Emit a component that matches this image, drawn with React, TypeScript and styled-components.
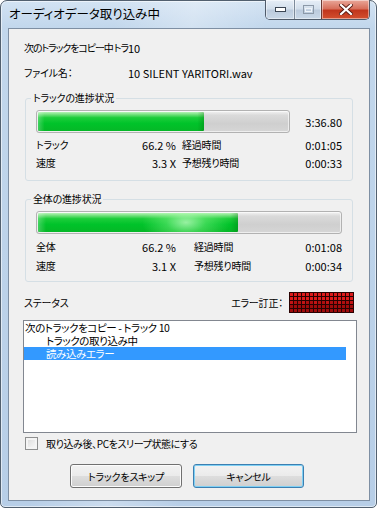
import React from "react";
import styled, { createGlobalStyle } from "styled-components";

const UI = `"Noto Sans CJK JP", "Liberation Sans", sans-serif`;

const Global = createGlobalStyle`
  html, body { margin: 0; padding: 0; background: #fff; }
  body { font-family: ${UI}; }
  #root { width: 377px; height: 508px; }
`;

const Window = styled.div`
  box-sizing: border-box;
  width: 377px;
  height: 508px;
  display: flex;
  flex-direction: column;
  border: 1px solid #52606f;
  border-radius: 7px 7px 5px 5px;
  padding: 0 6px 6px 7px;
  background:
    linear-gradient(100deg, rgba(255,255,255,0) 25%, rgba(255,255,255,0.28) 42%, rgba(255,255,255,0) 58%),
    linear-gradient(180deg, #d3e3f3 0px, #c2d7ec 26px, #b7cee7 100%);
  box-shadow: inset 0 0 0 1px rgba(255,255,255,0.55);
`;

const TitleBar = styled.div`
  height: 27px;
  display: flex;
  align-items: flex-start;
  justify-content: space-between;
`;

const Title = styled.div`
  font-size: 12.5px;
  line-height: 26px;
  padding-left: 1px;
  color: #000;
  font-feature-settings: "palt" 1;
`;

const Caption = styled.div`
  display: flex;
  margin-top: -1px;
  height: 19px;
  border: 1px solid #4f5b6a;
  border-top: none;
  border-radius: 0 0 5px 5px;
  overflow: hidden;
`;

const CapBtn = styled.div<{ $w: number; $close?: boolean }>`
  width: ${(p) => p.$w}px;
  height: 19px;
  display: flex;
  align-items: center;
  justify-content: center;
  box-sizing: border-box;
  border-left: ${(p) => (p.$close ? "1px solid #6b3a33" : "1px solid #7d8b9b")};
  &:first-child { border-left: none; }
  background: ${(p) =>
    p.$close
      ? "linear-gradient(180deg, #e9a89a 0%, #d7705c 45%, #c1361d 55%, #d3502f 100%)"
      : "linear-gradient(180deg, #e6eef7 0%, #d3dfec 45%, #bccbdd 55%, #c9d8e8 100%)"};
  box-shadow: inset 0 0 0 1px rgba(255,255,255,0.45);
`;

const Client = styled.div`
  flex: 1;
  display: flex;
  flex-direction: column;
  background: #f0f0f0;
  border: 1px solid #7e8fa3;
  padding: 12px 15px 0 15px;
  font-size: 10px;
  letter-spacing: -0.2px;
  color: #000;
  font-feature-settings: "palt" 1;
`;

const InfoGrid = styled.div`
  display: grid;
  grid-template-columns: 104px 1fr;
  row-gap: 11px;
  line-height: 14px;
  margin-bottom: 18px;
  white-space: nowrap;
  & > div:nth-child(2n) { font-size: 11px; letter-spacing: 0; }
`;

const Tight = styled.div`
  letter-spacing: -1.1px;
`;

const Group = styled.div<{ $mt?: number }>`
  position: relative;
  box-sizing: border-box;
  height: 83px;
  margin: ${(p) => p.$mt ?? 0}px 0 0 1px;
  width: 328px;
  border: 1px solid #d5dfe5;
  border-radius: 3px;
  padding: 11px 10px 0 10px;
`;

const GroupLabel = styled.div`
  position: absolute;
  left: 5px;
  top: -8px;
  padding: 0 2px;
  line-height: 14px;
  background: #f0f0f0;
`;

const BarRow = styled.div`
  display: flex;
  align-items: center;
  justify-content: space-between;
  height: 23px;
`;

const Track = styled.div<{ $w?: number }>`
  box-sizing: border-box;
  width: ${(p) => (p.$w ? `${p.$w}px` : "100%")};
  height: 23px;
  border: 1px solid #b2b2b2;
  border-radius: 3px;
  background: linear-gradient(180deg, #f4f4f4 0%, #dadada 20%, #cfcfcf 60%, #d6d6d6 100%);
  box-shadow: inset 0 0 0 1px rgba(255,255,255,0.6);
  overflow: hidden;
  padding: 1px;
`;

const Fill = styled.div<{ $glow?: boolean }>`
  height: 100%;
  border-radius: 1px;
  background:
    ${(p) =>
      p.$glow
        ? "radial-gradient(ellipse 22% 120% at 74% 50%, rgba(200,255,200,0.75) 0%, rgba(160,255,160,0.35) 45%, rgba(255,255,255,0) 100%),"
        : ""}
    linear-gradient(90deg, rgba(255,255,255,0.25) 0%, rgba(255,255,255,0) 4%, rgba(0,0,0,0) 96%, rgba(0,80,0,0.25) 100%),
    linear-gradient(180deg, #b7f3b7 0%, #6fe07a 14%, #1ccd3a 30%, #00c32a 60%, #05b827 100%);
`;

const Num = styled.div`
  font-size: 11px;
  letter-spacing: 0;
  line-height: 14px;
  text-align: right;
  white-space: pre;
`;

const StatGrid = styled.div<{ $rh: number }>`
  display: grid;
  grid-template-columns: 70px 70px 1fr auto;
  grid-auto-rows: ${(p) => p.$rh}px;
  align-items: center;
  margin-top: 3px;
  line-height: 14px;
`;

const Key = styled.div<{ $indent: number }>`
  padding-left: ${(p) => p.$indent}px;
`;

const StatusRow = styled.div`
  display: flex;
  align-items: center;
  justify-content: space-between;
  height: 21px;
  margin-top: 10px;
  line-height: 14px;
`;

const ErrBox = styled.div`
  display: flex;
  align-items: center;
  gap: 6px;
`;

const ListBox = styled.div`
  box-sizing: border-box;
  height: 113px;
  margin: 7px -3px 0 -1px;
  background: #fff;
  border: 1px solid #828790;
  font-size: 10.5px;
  letter-spacing: -0.4px;
`;

const Item = styled.div<{ $indent?: boolean; $selected?: boolean }>`
  height: 13px;
  line-height: 13px;
  margin: 0 10px 0 0;
  padding-left: ${(p) => (p.$indent ? 22 : 1)}px;
  background: ${(p) => (p.$selected ? "#3399ff" : "transparent")};
  color: ${(p) => (p.$selected ? "#fff" : "#000")};
  white-space: nowrap;
`;

const CheckRow = styled.label`
  display: flex;
  align-items: center;
  gap: 8px;
  margin: 4px 0 0 1px;
  height: 13px;
  line-height: 13px;
  letter-spacing: -0.4px;
`;

const Box = styled.span`
  box-sizing: border-box;
  width: 13px;
  height: 13px;
  border: 1px solid #8e8f8f;
  background: linear-gradient(135deg, #d8d8d8 0%, #eeeeee 60%, #fbfbfb 100%);
  box-shadow: inset 0 0 0 2px #f4f4f4;
`;

const ButtonRow = styled.div`
  display: flex;
  gap: 11px;
  margin-top: 14px;
  padding-left: 46px;
`;

const Button = styled.button<{ $focus?: boolean; $w: number }>`
  box-sizing: border-box;
  width: ${(p) => p.$w}px;
  height: 24px;
  font-family: ${UI};
  font-size: 10px;
  letter-spacing: -0.2px;
  font-feature-settings: "palt" 1;
  color: #000;
  border-radius: 3px;
  border: 1px solid ${(p) => (p.$focus ? "#3c7fb1" : "#707070")};
  background: linear-gradient(180deg, #f2f2f2 0%, #ebebeb 48%, #dddddd 52%, #cfcfcf 100%);
  box-shadow: inset 0 0 0 1px ${(p) => (p.$focus ? "#7fd0f4" : "#fcfcfc")};
  padding: 0;
`;

function ErrorGrid() {
  const cols = 16;
  const rows = 5;
  const cells: React.ReactNode[] = [];
  for (let r = 0; r < rows; r++) {
    for (let c = 0; c < cols; c++) {
      let fill = "#a00b0b";
      if (r < 2) fill = "#dd1b1b";
      else if (r === 2) fill = c % 3 === 0 ? "#c41414" : "#b00e0e";
      cells.push(<rect key={`${r}-${c}`} x={1 + c * 4} y={1 + r * 4} width={3} height={3} fill={fill} />);
    }
  }
  return (
    <svg width={65} height={21} viewBox="0 0 65 21">
      <rect x={0} y={0} width={65} height={21} fill="#2a0202" />
      {cells}
    </svg>
  );
}

const rows1 = [
  ["トラック", "66.2 %", "経過時間", "0:01:05"],
  ["速度", "3.3 X", "予想残り時間", "0:00:33"],
];
const rows2 = [
  ["全体", "66.2 %", "経過時間", "0:01:08"],
  ["速度", "3.1 X", "予想残り時間", "0:00:34"],
];

function Stats({ data, indent, rh }: { data: string[][]; indent: number; rh: number }) {
  return (
    <StatGrid $rh={rh}>
      {data.map((r) => (
        <React.Fragment key={r[0] + r[3]}>
          <div>{r[0]}</div>
          <Num>{r[1]}</Num>
          <Key $indent={indent}>{r[2]}</Key>
          <Num>{r[3]}</Num>
        </React.Fragment>
      ))}
    </StatGrid>
  );
}

export default function App() {
  const progress = 66.2;
  return (
    <>
      <Global />
      <Window>
        <TitleBar>
          <Title>オーディオデータ取り込み中</Title>
          <Caption>
            <CapBtn $w={28}>
              <svg width="11" height="5" viewBox="0 0 11 5">
                <rect x="0.5" y="0.5" width="10" height="4" fill="#fff" stroke="#3b4654" />
              </svg>
            </CapBtn>
            <CapBtn $w={27}>
              <svg width="11" height="9" viewBox="0 0 11 9">
                <rect x="0.5" y="0.5" width="10" height="8" fill="none" stroke="#8c99a8" />
                <rect x="2.5" y="3.5" width="6" height="3" fill="none" stroke="#eef3f8" />
              </svg>
            </CapBtn>
            <CapBtn $w={48} $close>
              <svg width="14" height="11" viewBox="0 0 14 11">
                <path d="M2 1 L12 10 M12 1 L2 10" stroke="#5a1d14" strokeWidth="4" strokeLinecap="square" />
                <path d="M2 1 L12 10 M12 1 L2 10" stroke="#ffffff" strokeWidth="2.2" strokeLinecap="square" />
              </svg>
            </CapBtn>
          </Caption>
        </TitleBar>
        <Client>
          <InfoGrid>
            <Tight>次のトラックをコピー中 トラ</Tight>
            <div>10</div>
            <div>ファイル名：</div>
            <div>10 SILENT YARITORI.wav</div>
          </InfoGrid>

          <Group>
            <GroupLabel>トラックの進捗状況</GroupLabel>
            <BarRow>
              <Track $w={254}>
                <Fill style={{ width: `${progress}%` }} />
              </Track>
              <Num>3:36.80</Num>
            </BarRow>
            <Stats data={rows1} indent={6} rh={18} />
          </Group>

          <Group $mt={18}>
            <GroupLabel>全体の進捗状況</GroupLabel>
            <BarRow>
              <Track>
                <Fill $glow style={{ width: `${progress}%` }} />
              </Track>
            </BarRow>
            <Stats data={rows2} indent={18} rh={19} />
          </Group>

          <StatusRow>
            <span>ステータス</span>
            <ErrBox>
              <span>エラー訂正：</span>
              <ErrorGrid />
            </ErrBox>
          </StatusRow>

          <ListBox>
            <Item>次のトラックをコピー - トラック 10</Item>
            <Item $indent>トラックの取り込み中</Item>
            <Item $indent $selected>読み込みエラー</Item>
          </ListBox>

          <CheckRow>
            <Box />
            <span>取り込み後、PCをスリープ状態にする</span>
          </CheckRow>

          <ButtonRow>
            <Button $w={112}>トラックをスキップ</Button>
            <Button $w={111} $focus>キャンセル</Button>
          </ButtonRow>
        </Client>
      </Window>
    </>
  );
}
